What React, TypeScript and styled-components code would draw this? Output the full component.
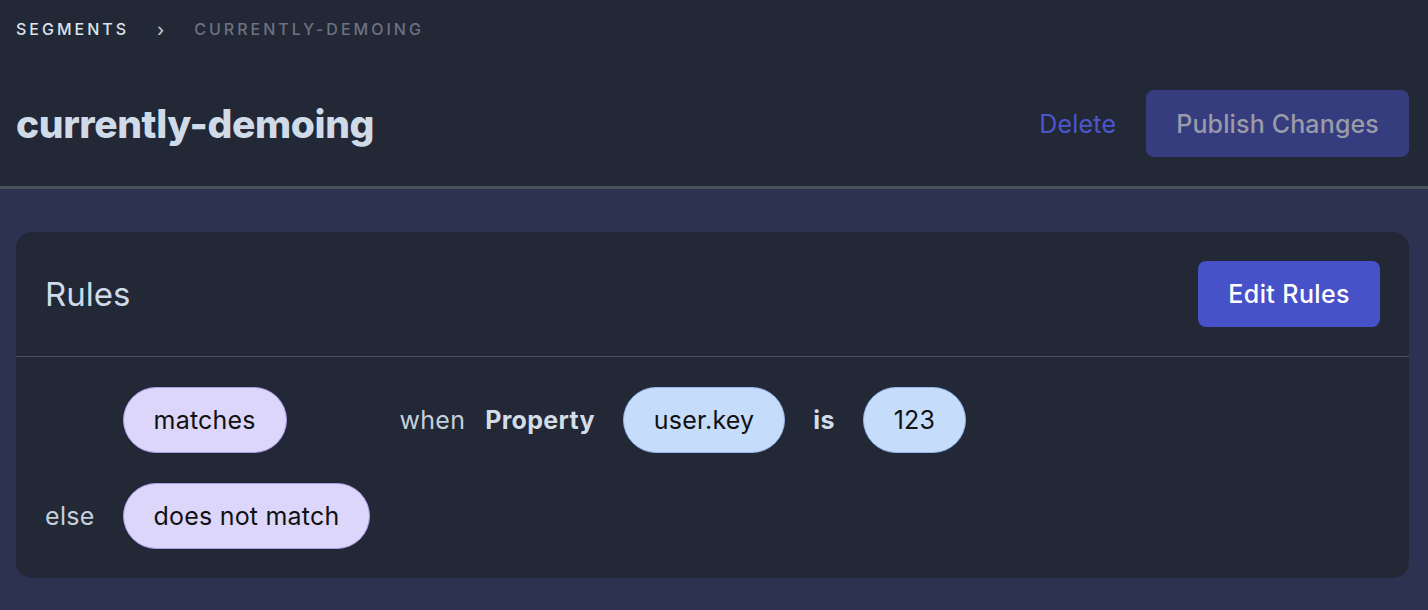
import React from "react";
import styled, { createGlobalStyle } from "styled-components";

const Global = createGlobalStyle`
  html, body { margin: 0; padding: 0; }
  body {
    background: #2d3250;
    font-family: Inter, "Noto Sans", sans-serif;
    -webkit-font-smoothing: antialiased;
  }
  * { box-sizing: border-box; }
`;

const Page = styled.div`
  min-height: 610px;
  background: #2d3250;
`;

const Header = styled.header`
  background: #222836;
  padding: 16px 19px 0 16px;
  border-bottom: 3px solid #4a4f5e;
`;

const Breadcrumb = styled.nav`
  display: flex;
  align-items: center;
  height: 26px;
  font-size: 16px;
  font-weight: 500;
  letter-spacing: 3px;
  text-transform: uppercase;
`;

const Crumb = styled.span<{ $muted?: boolean }>`
  color: ${(p) => (p.$muted ? "#6c7282" : "#dce4ee")};
`;

const Chevron = styled.span`
  color: #b9c2ce;
  margin: 0 30px 0 28px;
  font-size: 18px;
  letter-spacing: 0;
`;

const TitleRow = styled.div`
  display: flex;
  align-items: center;
  justify-content: space-between;
  margin-top: 48px;
  padding-bottom: 29px;
`;

const Title = styled.h1`
  margin: 0;
  font-size: 39px;
  font-weight: 800;
  color: #cfdbe8;
  letter-spacing: -0.4px;
`;

const Actions = styled.div`
  display: flex;
  align-items: center;
  gap: 30px;
`;

const LinkButton = styled.button`
  background: none;
  border: none;
  padding: 0;
  font-family: inherit;
  font-size: 25px;
  letter-spacing: 0.2px;
  color: #4b56cf;
  cursor: pointer;
`;

const Button = styled.button<{ $disabled?: boolean }>`
  height: 67px;
  padding: 0 30px;
  border-radius: 8px;
  border: none;
  font-family: inherit;
  font-size: 25px;
  font-weight: 500;
  letter-spacing: 0.15px;
  background: ${(p) => (p.$disabled ? "#363d7f" : "#4752c8")};
  color: ${(p) => (p.$disabled ? "#9a9ba8" : "#ffffff")};
  cursor: pointer;
`;

const Main = styled.main`
  padding: 43px 19px 32px 16px;
`;

const Card = styled.section`
  background: #222836;
  border-radius: 16px;
`;

const CardHeader = styled.div`
  display: flex;
  align-items: center;
  justify-content: space-between;
  padding: 29px 29px;
  border-bottom: 1px solid #4a4f5e;
`;

const CardTitle = styled.h2`
  margin: 0;
  font-size: 33px;
  font-weight: 400;
  color: #cfdbe8;
`;

const EditButton = styled(Button)`
  height: 66px;
  padding: 0 30px;
  font-size: 25px;
  font-weight: 500;
  letter-spacing: 0.4px;
`;

const RulesGrid = styled.div`
  display: grid;
  grid-template-columns: auto auto 1fr;
  column-gap: 28px;
  row-gap: 30px;
  align-items: center;
  justify-items: start;
  padding: 30px 29px 29px;
`;

const Label = styled.span<{ $bold?: boolean }>`
  font-size: 25px;
  letter-spacing: 0.3px;
  font-weight: ${(p) => (p.$bold ? 700 : 400)};
  color: ${(p) => (p.$bold ? "#d3dde8" : "#c4cfdc")};
`;

const Pill = styled.span<{ $tone: "violet" | "blue" }>`
  display: inline-flex;
  align-items: center;
  height: 66px;
  padding: 0 30px;
  border-radius: 33px;
  font-size: 25px;
  letter-spacing: 0.2px;
  color: #111;
  background: ${(p) => (p.$tone === "violet" ? "#ddd6fb" : "#c6dcfb")};
  border: 1px solid ${(p) => (p.$tone === "violet" ? "#a99ce6" : "#93b4ec")};
`;

const Condition = styled.div`
  display: flex;
  align-items: center;
  gap: 28px;
  padding-left: 1px;
`;

const When = styled(Label)`
  margin-right: -8px;
`;

export default function App() {
  return (
    <Page>
      <Global />
      <Header>
        <Breadcrumb>
          <Crumb>Segments</Crumb>
          <Chevron>›</Chevron>
          <Crumb $muted>currently-demoing</Crumb>
        </Breadcrumb>
        <TitleRow>
          <Title>currently-demoing</Title>
          <Actions>
            <LinkButton>Delete</LinkButton>
            <Button $disabled>Publish Changes</Button>
          </Actions>
        </TitleRow>
      </Header>
      <Main>
        <Card>
          <CardHeader>
            <CardTitle>Rules</CardTitle>
            <EditButton>Edit Rules</EditButton>
          </CardHeader>
          <RulesGrid>
            <span />
            <Pill $tone="violet">matches</Pill>
            <Condition>
              <When>when</When>
              <Label $bold>Property</Label>
              <Pill $tone="blue">user.key</Pill>
              <Label $bold>is</Label>
              <Pill $tone="blue">123</Pill>
            </Condition>
            <Label>else</Label>
            <Pill $tone="violet">does not match</Pill>
            <span />
          </RulesGrid>
        </Card>
      </Main>
    </Page>
  );
}
